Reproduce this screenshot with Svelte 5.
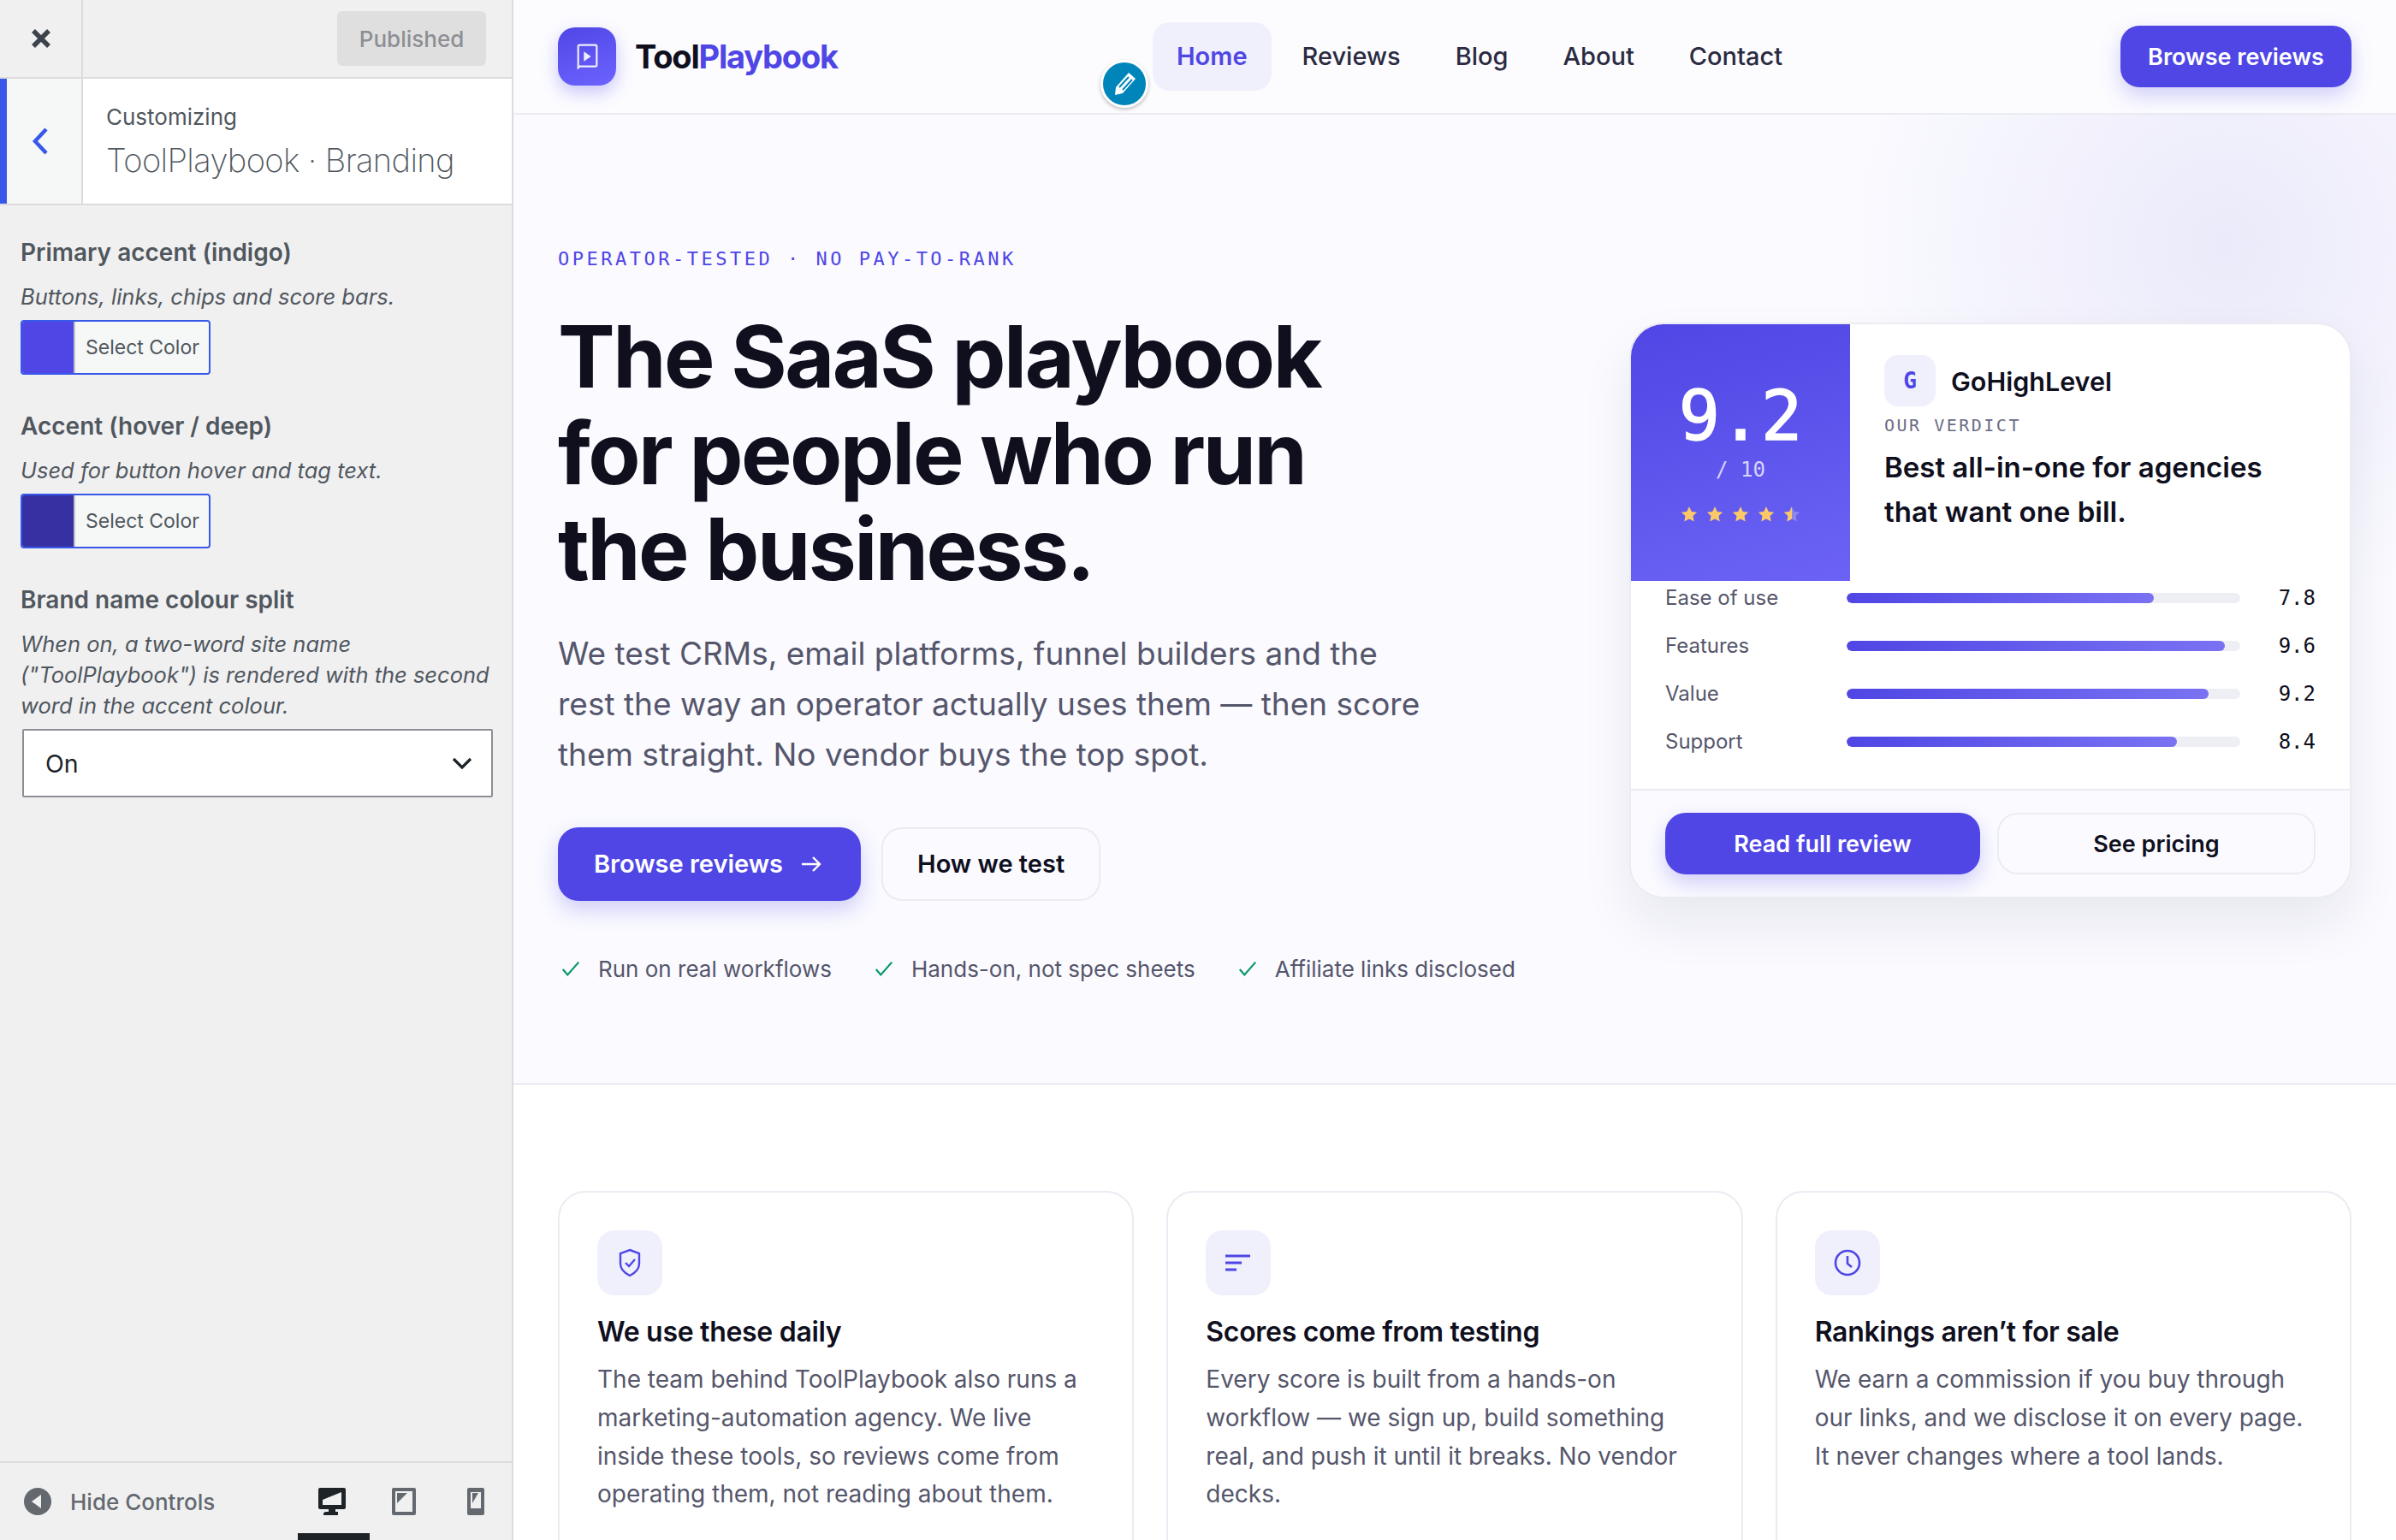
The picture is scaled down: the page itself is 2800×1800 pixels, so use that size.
<script>
  const nav = ["Home", "Reviews", "Blog", "About", "Contact"];
  const scores = [
    { label: "Ease of use", value: "7.8", pct: 78 },
    { label: "Features", value: "9.6", pct: 96 },
    { label: "Value", value: "9.2", pct: 92 },
    { label: "Support", value: "8.4", pct: 84 },
  ];
  const checks = ["Run on real workflows", "Hands-on, not spec sheets", "Affiliate links disclosed"];
  const cards = [
    {
      icon: "shield",
      title: "We use these daily",
      body: "The team behind ToolPlaybook also runs a marketing-automation agency. We live inside these tools, so reviews come from operating them, not reading about them.",
    },
    {
      icon: "lines",
      title: "Scores come from testing",
      body: "Every score is built from a hands-on workflow — we sign up, build something real, and push it until it breaks. No vendor decks.",
    },
    {
      icon: "clock",
      title: "Rankings aren’t for sale",
      body: "We earn a commission if you buy through our links, and we disclose it on every page. It never changes where a tool lands.",
    },
  ];
  const star = "M10 1l2.8 5.9 6.4.8-4.7 4.4 1.2 6.4L10 15.4l-5.7 3.1 1.2-6.4L.8 7.7l6.4-.8z";
</script>

<div class="app">
  <aside class="panel">
    <div class="panel-top">
      <div class="close">
        <svg width="28" height="28" viewBox="0 0 28 28"><path d="M5 5l18 18M23 5L5 23" stroke="#3c434a" stroke-width="5.5" /></svg>
      </div>
      <span class="published">Published</span>
    </div>
    <div class="section-title">
      <div class="back">
        <svg width="20" height="34" viewBox="0 0 20 34" fill="none"><path d="M17 3L4 17l13 14" stroke="#3858e9" stroke-width="4.5" /></svg>
      </div>
      <div class="crumb">
        <span>Customizing</span>
        <h3>ToolPlaybook · Branding</h3>
      </div>
    </div>

    <div class="controls">
      <div class="control">
        <h4>Primary accent (indigo)</h4>
        <p>Buttons, links, chips and score bars.</p>
        <div class="color-btn"><i style="background:#4f46e5"></i><span>Select Color</span></div>
      </div>
      <div class="control">
        <h4>Accent (hover / deep)</h4>
        <p>Used for button hover and tag text.</p>
        <div class="color-btn"><i style="background:#3730a3"></i><span>Select Color</span></div>
      </div>
      <div class="control">
        <h4>Brand name colour split</h4>
        <p>When on, a two-word site name ("ToolPlaybook") is rendered with the second word in the accent colour.</p>
        <div class="select">
          <span>On</span>
          <svg width="24" height="14" viewBox="0 0 24 14" fill="none"><path d="M2 2l10 10L22 2" stroke="#1d2327" stroke-width="3.2" /></svg>
        </div>
      </div>
    </div>

    <div class="panel-foot">
      <div class="hide">
        <svg width="32" height="32" viewBox="0 0 32 32"><circle cx="16" cy="16" r="16" fill="#646970" /><path d="M20 8v16L9 16z" fill="#f0f0f1" /></svg>
        <span>Hide Controls</span>
      </div>
      <div class="devices">
        <div class="device active">
          <svg width="32" height="32" viewBox="0 0 32 32"><path fill="#1d2327" d="M2 0h28a2 2 0 0 1 2 2v21a2 2 0 0 1-2 2H20v3h3v4H6v-1a3 3 0 0 1 3-3h3v-3H2a2 2 0 0 1-2-2V2a2 2 0 0 1 2-2z" /><path fill="#f0f0f1" d="M5 5h22v15H5z" /><path fill="#1d2327" d="M5 5h22L5 14z" /></svg>
        </div>
        <div class="device">
          <svg width="28" height="32" viewBox="0 0 28 32"><rect width="28" height="32" rx="2" fill="#646970" /><path fill="#f0f0f1" d="M4 4h20v24H4z" /><path fill="#646970" d="M6 6h12L6 18z" /></svg>
        </div>
        <div class="device">
          <svg width="20" height="32" viewBox="0 0 20 32"><rect width="20" height="32" rx="2" fill="#646970" /><path fill="#f0f0f1" d="M4 5h12v19H4z" /><path fill="#646970" d="M6 6h7l-7 12z" /></svg>
        </div>
      </div>
      <div class="active-bar"></div>
    </div>
  </aside>

  <main class="site">
    <header class="masthead">
      <div class="brand">
        <div class="logo">
          <svg width="25" height="30" viewBox="0 0 30 36" fill="none">
            <path d="M2 34V4a2 2 0 0 1 2-2h22a2 2 0 0 1 2 2v26a2 2 0 0 1-2 2H4z" stroke="#fff" stroke-width="2.6" stroke-opacity=".9" />
            <path d="M10 11l10 7-10 7z" fill="#fff" fill-opacity=".9" />
          </svg>
        </div>
        <span class="name">Tool<b>Playbook</b></span>
      </div>
      <nav>
        {#each nav as item, i}
          <span class="nav-item" class:current={i === 0}>{item}</span>
        {/each}
      </nav>
      <span class="btn small">Browse reviews</span>
      <div class="edit">
        <svg width="30" height="30" viewBox="0 0 30 30"><path fill="#fff" d="M20 2l8 7-15 17-9 2 1-9z" /><path d="M9 19L20 7M13 22L24 10" stroke="#0085ba" stroke-width="2" /></svg>
      </div>
    </header>

    <section class="hero">
      <div class="hero-copy">
        <div class="eyebrow">OPERATOR-TESTED · NO PAY-TO-RANK</div>
        <h1>The SaaS playbook for people who run the business.</h1>
        <p class="lead">We test CRMs, email platforms, funnel builders and the rest the way an operator actually uses them — then score them straight. No vendor buys the top spot.</p>
        <div class="actions">
          <span class="btn big primary">
            Browse reviews
            <svg width="26" height="22" viewBox="0 0 26 22" fill="none"><path d="M2 11h21M15 3l8 8-8 8" stroke="#fff" stroke-width="2.4" /></svg>
          </span>
          <span class="btn ghost big">How we test</span>
        </div>
        <ul class="checks">
          {#each checks as c}
            <li>
              <svg width="24" height="22" viewBox="0 0 26 22" fill="none"><path d="M3 12l6 7L23 3" stroke="#059669" stroke-width="2.4" /></svg>
              {c}
            </li>
          {/each}
        </ul>
      </div>

      <div class="review">
        <div class="review-top">
          <div class="score">
            <div class="num">9.2</div>
            <div class="of">/ 10</div>
            <div class="stars">
              {#each [0, 1, 2, 3] as s}
                <svg width="20" height="20" viewBox="0 0 20 20"><path d={star} fill="#fcc868" /></svg>
              {/each}
              <svg width="20" height="20" viewBox="0 0 20 20"><path d={star} fill="#8d88e8" /><path d="M10 1v14.4l-5.7 3.1 1.2-6.4L.8 7.7l6.4-.8z" fill="#fcc868" /></svg>
            </div>
          </div>
          <div class="verdict">
            <div class="tool"><span class="tile">G</span><span>GoHighLevel</span></div>
            <div class="tag">OUR VERDICT</div>
            <p>Best all-in-one for agencies that want one bill.</p>
          </div>
        </div>
        <div class="rows">
          {#each scores as s}
            <div class="row">
              <span class="label">{s.label}</span>
              <div class="track"><div class="fill" style="width:{s.pct}%"></div></div>
              <span class="val">{s.value}</span>
            </div>
          {/each}
        </div>
        <div class="review-foot">
          <span class="btn mid">Read full review</span>
          <span class="btn ghost mid">See pricing</span>
        </div>
      </div>
    </section>

    <section class="why">
      {#each cards as c}
        <article class="card">
          <div class="icon">
            {#if c.icon === "shield"}
              <svg width="28" height="34" viewBox="0 0 28 34" fill="none" stroke="#4f46e5" stroke-width="2.4"><path d="M14 2l11 4v12c0 6-5 11-11 14C8 29 3 24 3 18V6z" /><path d="M9 17l4 4 7-8" /></svg>
            {:else if c.icon === "lines"}
              <svg width="30" height="24" viewBox="0 0 30 24" fill="none" stroke="#4f46e5" stroke-width="3"><path d="M0 4h29M0 12h19M0 20h13" /></svg>
            {:else}
              <svg width="32" height="32" viewBox="0 0 32 32" fill="none" stroke="#4f46e5" stroke-width="2.6"><circle cx="16" cy="16" r="14" /><path d="M16 8v9l5 4" /></svg>
            {/if}
          </div>
          <h3>{c.title}</h3>
          <p>{c.body}</p>
        </article>
      {/each}
    </section>
  </main>
</div>

<style>
  :global(body) {
    margin: 0;
    overflow: hidden;
    font-family: Inter, "Liberation Sans", sans-serif;
  }

  .app {
    display: flex;
    height: 1800px;
    overflow: hidden;
  }

  /* customizer panel */
  .panel {
    position: relative;
    box-sizing: border-box;
    flex: 0 0 600px;
    min-width: 0;
    display: flex;
    flex-direction: column;
    background: #f0f0f1;
    border-right: 2px solid #dcdcde;
    color: #50575e;
  }

  .panel-top {
    display: flex;
    align-items: center;
    justify-content: space-between;
    box-sizing: border-box;
    height: 92px;
    padding-right: 30px;
    border-bottom: 2px solid #dcdcde;
  }

  .close {
    display: flex;
    align-items: center;
    justify-content: center;
    width: 95px;
    height: 100%;
    border-right: 2px solid #dcdcde;
  }

  .published {
    display: flex;
    align-items: center;
    justify-content: center;
    width: 174px;
    height: 64px;
    border-radius: 6px;
    background: #dfdfdf;
    color: #8c8f94;
    font-size: 26px;
    font-weight: 500;
  }

  .section-title {
    display: flex;
    box-sizing: border-box;
    height: 148px;
    background: #fff;
    border-bottom: 2px solid #dcdcde;
  }

  .back {
    display: flex;
    align-items: center;
    justify-content: center;
    box-sizing: border-box;
    width: 97px;
    padding-right: 10px;
    background: #f6f7f7;
    border-left: 8px solid #3858e9;
    border-right: 2px solid #dcdcde;
  }

  .crumb {
    padding: 27px 0 0 27px;
    font-size: 26px;
    line-height: 36px;
  }

  .crumb h3 {
    margin: 8px 0 0;
    font-size: 38px;
    font-weight: 200;
    line-height: 48px;
    letter-spacing: -0.6px;
  }

  .controls {
    flex: 1;
    padding: 37px 24px 0;
  }

  .control {
    margin-bottom: 42px;
  }

  .control h4 {
    margin: 0;
    font-size: 28px;
    font-weight: 600;
    line-height: 36px;
  }

  .control p {
    margin: 16px 0 9px;
    font-size: 25.5px;
    font-style: italic;
    line-height: 36px;
  }

  .color-btn {
    display: flex;
    box-sizing: border-box;
    width: 222px;
    height: 64px;
    background: #f6f7f7;
    border: 2px solid #3858e9;
    border-radius: 4px;
    color: #50575e;
    font-size: 23px;
    line-height: 60px;
    overflow: hidden;
  }

  .color-btn i {
    width: 60px;
    border-right: 2px solid #c3c4c7;
  }

  .color-btn span {
    padding-left: 12px;
  }

  .select {
    display: flex;
    align-items: center;
    justify-content: space-between;
    box-sizing: border-box;
    width: 550px;
    height: 80px;
    margin: 1px 0 0 2px;
    padding: 0 22px 0 25px;
    background: #fff;
    border: 2px solid #8c8f94;
    border-radius: 2px;
    color: #1d2327;
    font-size: 28.5px;
  }

  .panel-foot {
    display: flex;
    align-items: center;
    justify-content: space-between;
    position: relative;
    box-sizing: border-box;
    height: 92px;
    padding: 0 0 0 28px;
    border-top: 2px solid #dcdcde;
  }

  .hide {
    display: flex;
    align-items: center;
    gap: 22px;
    color: #646970;
    font-size: 26px;
    font-weight: 500;
  }

  .devices {
    display: flex;
    align-items: center;
  }

  .device {
    display: flex;
    justify-content: center;
    width: 84px;
  }

  .active-bar {
    position: absolute;
    left: 348px;
    bottom: 0;
    width: 84px;
    height: 8px;
    background: #1d2327;
  }

  /* site preview */
  .site {
    flex: 1;
    min-width: 0;
    background: #fff;
    color: #0f0f1e;
  }

  .masthead {
    position: relative;
    display: flex;
    align-items: center;
    justify-content: space-between;
    box-sizing: border-box;
    height: 134px;
    padding: 0 52px;
    background: #fcfcff;
    border-bottom: 2px solid #ebebf3;
  }

  .brand {
    display: flex;
    align-items: center;
    gap: 22px;
    width: 695px;
  }

  .logo {
    display: flex;
    align-items: center;
    justify-content: center;
    width: 68px;
    height: 68px;
    border-radius: 20px;
    background: linear-gradient(160deg, #4f46e5, #6c63ff);
    box-shadow: 0 8px 20px rgba(79, 70, 229, 0.3);
  }

  .name {
    font-size: 38px;
    font-weight: 700;
    letter-spacing: -1.2px;
  }

  .name b {
    color: #4f46e5;
    font-weight: 700;
  }

  nav {
    flex: 1;
    display: flex;
    align-items: center;
    gap: 8px;
  }

  .nav-item {
    padding: 22px 28px;
    border-radius: 20px;
    color: #2a2a40;
    font-size: 29px;
    font-weight: 500;
    line-height: 36px;
  }

  .nav-item.current {
    background: #eff0fc;
    color: #4f46e5;
    font-weight: 600;
  }

  .edit {
    position: absolute;
    left: 686px;
    top: 70px;
    display: flex;
    align-items: center;
    justify-content: center;
    box-sizing: border-box;
    width: 56px;
    height: 56px;
    background: #0085ba;
    border: 3px solid #fff;
    border-radius: 50%;
    box-shadow: 0 2px 4px rgba(0, 0, 0, 0.25);
  }

  .btn {
    display: inline-flex;
    align-items: center;
    justify-content: center;
    box-sizing: border-box;
    background: #4f46e5;
    color: #fff;
    font-weight: 600;
    box-shadow: 0 10px 24px rgba(79, 70, 229, 0.25);
  }

  .btn.ghost {
    background: transparent;
    border: 2px solid #ebebf3;
    color: #0f0f1e;
    box-shadow: none;
  }

  .btn.small {
    width: 270px;
    height: 72px;
    border-radius: 22px;
    font-size: 27px;
  }

  .btn.big {
    gap: 20px;
    height: 86px;
    padding: 0 40px;
    border-radius: 24px;
    font-size: 29px;
  }

  .btn.big.primary {
    padding: 0 45px 0 42px;
  }

  .btn.mid {
    flex: 1;
    height: 72px;
    border-radius: 24px;
    font-size: 27px;
  }

  .hero {
    display: flex;
    justify-content: space-between;
    box-sizing: border-box;
    height: 1134px;
    padding: 0 52px;
    background:
      radial-gradient(circle 440px at 2000px 153px, #ebeafa 0%, rgba(235, 234, 250, 0) 100%),
      #fafaff;
    border-bottom: 2px solid #ebebf3;
  }

  .hero-copy {
    padding-top: 156px;
  }

  .eyebrow {
    color: #4f46e5;
    font-family: "DejaVu Sans Mono", monospace;
    font-size: 22px;
    line-height: 26px;
    letter-spacing: 3.5px;
  }

  h1 {
    width: 1000px;
    margin: 45px 0 0;
    font-size: 100px;
    font-weight: 700;
    line-height: 112.5px;
    letter-spacing: -2.5px;
  }

  .lead {
    width: 1030px;
    margin: 35px 0 0;
    color: #55566b;
    font-size: 37px;
    line-height: 59px;
  }

  .actions {
    display: flex;
    gap: 24px;
    margin-top: 56px;
  }

  .checks {
    display: flex;
    gap: 46px;
    margin: 64px 0 0;
    padding: 0;
    list-style: none;
    color: #55566b;
    font-size: 26px;
  }

  .checks li {
    display: flex;
    align-items: center;
    gap: 20px;
  }

  .checks svg {
    margin-left: 3px;
  }

  .review {
    align-self: flex-start;
    box-sizing: border-box;
    width: 844px;
    margin-top: 243px;
    background: #fff;
    border: 2px solid #ebebf3;
    border-radius: 40px;
    box-shadow: 0 30px 60px rgba(20, 20, 60, 0.08);
    overflow: hidden;
  }

  .review-top {
    display: flex;
    height: 300px;
  }

  .score {
    flex: 0 0 256px;
    box-sizing: border-box;
    padding-top: 62px;
    background: linear-gradient(165deg, #4f46e5, #6c63f5);
    color: #fff;
    text-align: center;
  }

  .num {
    font-family: "DejaVu Sans Mono", monospace;
    font-size: 80px;
    line-height: 92px;
    -webkit-text-stroke: 1.5px #fff;
  }

  .of {
    margin-top: 0;
    color: rgba(255, 255, 255, 0.75);
    font-family: "DejaVu Sans Mono", monospace;
    font-size: 24px;
    line-height: 32px;
  }

  .stars {
    display: flex;
    justify-content: center;
    gap: 10px;
    margin-top: 26px;
  }

  .verdict {
    padding: 36px 40px 0;
  }

  .tool {
    display: flex;
    align-items: center;
    gap: 18px;
    font-size: 30.5px;
    font-weight: 600;
  }

  .tile {
    display: flex;
    align-items: center;
    justify-content: center;
    width: 60px;
    height: 60px;
    border-radius: 16px;
    background: #eff0fc;
    color: #4f46e5;
    font-family: "DejaVu Sans Mono", monospace;
    font-size: 26px;
    font-weight: 700;
  }

  .tag {
    margin-top: 9px;
    color: #6b6c84;
    font-family: "DejaVu Sans Mono", monospace;
    font-size: 20px;
    line-height: 26px;
    letter-spacing: 2.5px;
  }

  .verdict p {
    margin: 10px 0 0;
    font-size: 33px;
    font-weight: 600;
    line-height: 52px;
  }

  .rows {
    display: flex;
    flex-direction: column;
    gap: 20px;
    padding: 2px 40px 37px;
    border-bottom: 2px solid #ebebf3;
  }

  .row {
    display: grid;
    grid-template-columns: 212px 460px 1fr;
    align-items: center;
    height: 36px;
  }

  .label {
    color: #55566b;
    font-size: 24px;
    line-height: 36px;
  }

  .track {
    height: 12px;
    border-radius: 6px;
    background: #eeeff4;
    overflow: hidden;
  }

  .fill {
    height: 100%;
    border-radius: 6px;
    background: linear-gradient(90deg, #4f46e5, #7a72f2);
  }

  .val {
    font-family: "DejaVu Sans Mono", monospace;
    font-size: 24px;
    line-height: 30px;
    text-align: right;
  }

  .review-foot {
    display: flex;
    gap: 20px;
    padding: 26px 40px;
    background: #fbfbff;
  }

  .why {
    display: grid;
    grid-template-columns: repeat(3, 1fr);
    gap: 38px;
    padding: 124px 52px 0;
  }

  .card {
    box-sizing: border-box;
    height: 600px;
    padding: 44px 44px 0;
    background: #fff;
    border: 2px solid #ebebf3;
    border-radius: 32px;
  }

  .icon {
    display: flex;
    align-items: center;
    justify-content: center;
    width: 76px;
    height: 76px;
    border-radius: 20px;
    background: #eff0fc;
  }

  .card h3 {
    margin: 21px 0 0;
    font-size: 32px;
    font-weight: 600;
    line-height: 44px;
    letter-spacing: -0.3px;
  }

  .card p {
    margin: 11px 0 0;
    color: #55566b;
    font-size: 28px;
    line-height: 44.8px;
  }
</style>
